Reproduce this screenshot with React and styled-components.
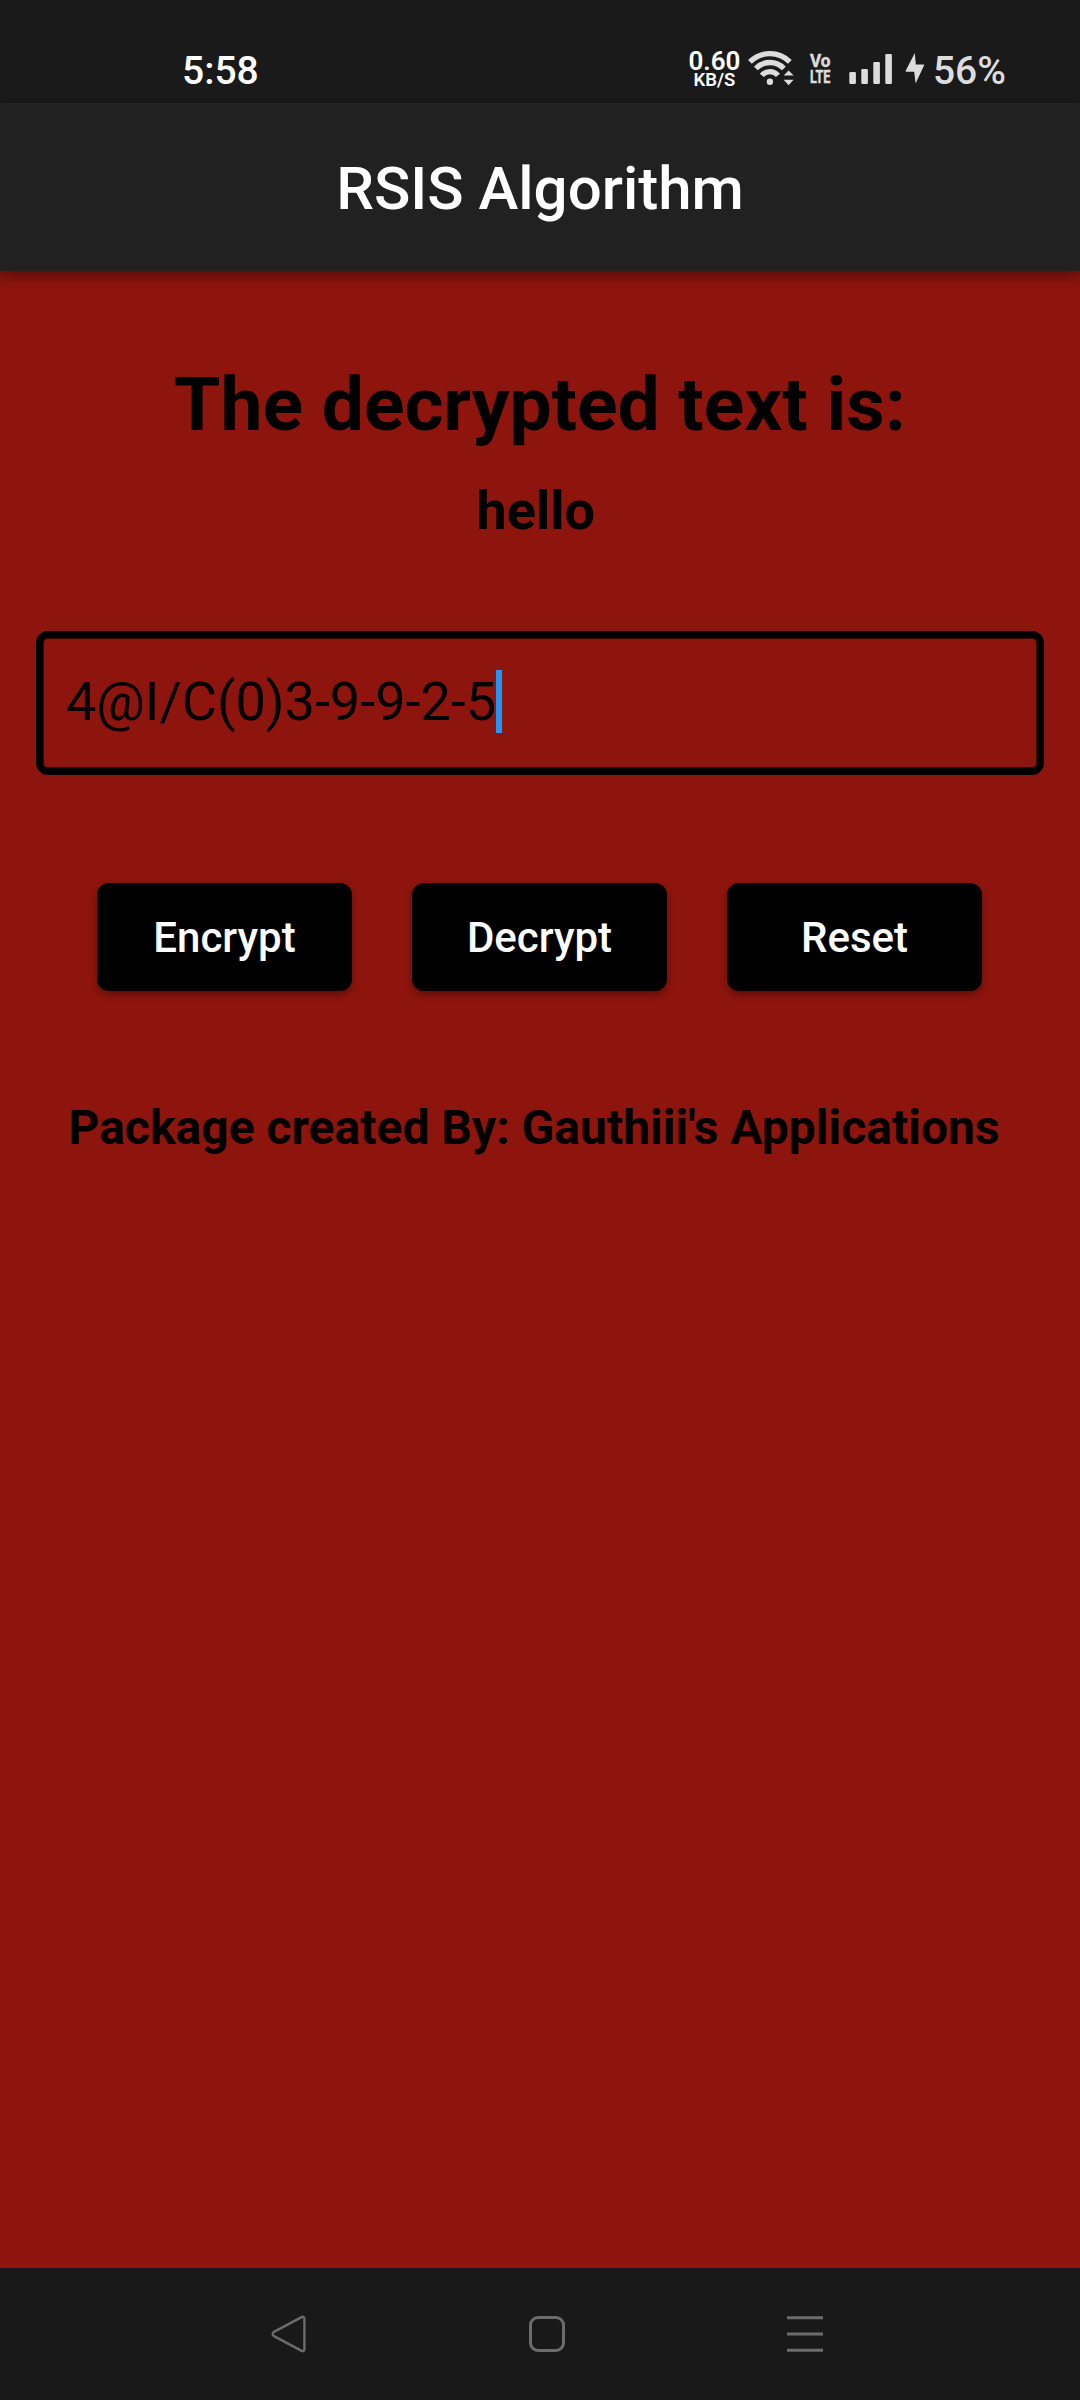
import React from "react";
import styled, { createGlobalStyle } from "styled-components";

const GlobalStyle = createGlobalStyle`
  *, *::before, *::after { box-sizing: border-box; }
  body {
    margin: 0;
    background: #8d150d;
    font-family: Roboto, "Liberation Sans", sans-serif;
  }
`;

const Screen = styled.div`
  width: 1080px;
  height: 2400px;
  display: flex;
  flex-direction: column;
  background: #8d150d;
  color: #000;
  overflow: hidden;
`;

const StatusBar = styled.header`
  height: 103px;
  flex: none;
  display: flex;
  justify-content: space-between;
  align-items: flex-start;
  padding: 48px 74px 0 182px;
  background: #1a1a1a;
`;

const Clock = styled.span`
  font-size: 39px;
  line-height: 46px;
  font-weight: 500;
  color: #fff;
`;

const StatusIcons = styled.div`
  display: flex;
  align-items: flex-start;
  height: 46px;
  color: #dcdcdc;
`;

const Speed = styled.div`
  width: 53px;
  margin-right: 8px;
  padding-top: 1px;
  display: flex;
  flex-direction: column;
  align-items: center;
  color: #fff;
  font-weight: 600;
`;

const SpeedValue = styled.span`
  font-size: 26px;
  line-height: 24px;
`;

const SpeedUnit = styled.span`
  font-size: 18.5px;
  line-height: 14px;
`;

const StatusGlyph = styled.svg`
  display: block;
  flex: none;
  overflow: visible;
  margin-top: -1px;
  margin-right: ${(p) => p.$gap}px;
`;

const Battery = styled.span`
  font-size: 39px;
  line-height: 46px;
  font-weight: 500;
`;

const AppBar = styled.div`
  height: 168px;
  flex: none;
  display: flex;
  align-items: center;
  justify-content: center;
  padding-top: 3px;
  background: #212121;
  box-shadow: 0 5px 14px rgba(0, 0, 0, 0.4);
  z-index: 1;
`;

const Title = styled.h1`
  margin: 0;
  font-size: 60px;
  line-height: 70px;
  font-weight: 500;
  color: #fff;
`;

const Content = styled.main`
  flex: 1;
  display: flex;
  flex-direction: column;
  align-items: center;
  padding: 89px 36px 0;
`;

const Heading = styled.h2`
  margin: 0 0 31px;
  font-size: 75px;
  line-height: 88px;
  font-weight: 700;
  white-space: pre;
`;

const Result = styled.p`
  margin: 0 0 89px 5px;
  font-size: 54px;
  line-height: 63px;
  font-weight: 700;
  white-space: pre;
`;

const Field = styled.div`
  width: 100%;
  height: 144px;
  display: flex;
  align-items: center;
  padding-left: 23px;
  border: 7px solid #000;
  border-radius: 12px;
  box-shadow: inset 0 0 0 1px rgba(0, 0, 0, 0.6);
  font-size: 54px;
  line-height: 63px;
`;

const Caret = styled.span`
  width: 6px;
  height: 63px;
  margin-top: -3px;
  background: #2196f3;
`;

const Value = styled.span`
  margin-top: -3px;
`;

const Actions = styled.div`
  display: flex;
  gap: 60px;
  margin: 108px 1px 108px 0;
`;

const Button = styled.button`
  width: 255px;
  height: 108px;
  padding: 0;
  border: 0;
  border-radius: 12px;
  background: #000;
  color: #fff;
  font-family: inherit;
  font-size: 42px;
  line-height: 49px;
  font-weight: 500;
  box-shadow: 0 4px 7px rgba(0, 0, 0, 0.32);
`;

const Credit = styled.p`
  margin: 0;
  font-size: 48px;
  line-height: 57px;
  font-weight: 700;
  white-space: pre;
`;

const NavBar = styled.nav`
  height: 132px;
  flex: none;
  display: flex;
  align-items: center;
  justify-content: space-between;
  padding: 0 256px 0 270px;
  background: #191919;
`;

const NavIcon = styled.svg`
  display: block;
  width: 38px;
  height: 38px;
  fill: none;
  stroke: #6c6c6c;
  stroke-width: 3;
  stroke-linejoin: round;
`;

const WifiIcon = () => (
  <StatusGlyph width="46" height="40" viewBox="0 0 46 40" $gap={15}>
    <g fill="none" stroke="currentColor" strokeWidth="5.3">
      <path d="M0.9 14.9 A28.3 28.3 0 0 1 40.9 14.9" />
      <path d="M6.9 21.5 A19.3 19.3 0 0 1 34.9 21.5" />
      <path d="M12.8 28.4 A10.6 10.6 0 0 1 29 28.4" />
    </g>
    <circle cx="20.9" cy="34.8" r="3.2" fill="currentColor" />
    <path d="M34.6 28.6 L39.6 23.4 L44.6 28.6 Z M34.6 32.8 L44.6 32.8 L39.6 38.2 Z" fill="currentColor" />
  </StatusGlyph>
);

const VolteIcon = () => (
  <StatusGlyph width="23" height="40" viewBox="0 0 23 40" $gap={16}>
    <g
      fill="currentColor"
      stroke="currentColor"
      strokeWidth="0.5"
      fontFamily="Roboto, sans-serif"
      fontWeight="700"
      fontSize="19"
    >
      <text transform="translate(0 20.4) scale(0.9 1)">Vo</text>
      <text transform="translate(0 36.4) scale(0.67 1)">LTE</text>
    </g>
  </StatusGlyph>
);

const BARS = [12, 15, 22, 30];

const SignalIcon = () => (
  <StatusGlyph width="44" height="40" viewBox="0 0 44 40" $gap={12}>
    {BARS.map((h, i) => (
      <rect key={h} x={0.3 + i * 12} y={37 - h} width="6.6" height={h} rx="1.2" fill="currentColor" />
    ))}
  </StatusGlyph>
);

const BoltIcon = () => (
  <StatusGlyph width="20" height="40" viewBox="0 0 20 40" $gap={8}>
    <path
      d="M9.8 6 L0.8 23.6 Q0.3 24.8 1.4 24.8 L9.2 24.8 L10.6 36.6 L19 18.6 Q19.5 17.4 18.4 17.4 L10.8 17.4 Z"
      fill="currentColor"
    />
  </StatusGlyph>
);

export default function App() {
  return (
    <>
      <GlobalStyle />
      <Screen>
        <StatusBar>
          <Clock>5:58</Clock>
          <StatusIcons>
            <Speed>
              <SpeedValue>0.60</SpeedValue>
              <SpeedUnit>KB/S</SpeedUnit>
            </Speed>
            <WifiIcon />
            <VolteIcon />
            <SignalIcon />
            <BoltIcon />
            <Battery>56%</Battery>
          </StatusIcons>
        </StatusBar>
        <AppBar>
          <Title>RSIS Algorithm</Title>
        </AppBar>
        <Content>
          <Heading>The decrypted text is:</Heading>
          <Result>{"hello "}</Result>
          <Field>
            <Value>4@I/C(0)3-9-9-2-5</Value>
            <Caret />
          </Field>
          <Actions>
            <Button>Encrypt</Button>
            <Button>Decrypt</Button>
            <Button>Reset</Button>
          </Actions>
          <Credit>{"Package created By: Gauthiii's Applications "}</Credit>
        </Content>
        <NavBar>
          <NavIcon viewBox="0 0 38 38">
            <path d="M31.2 2.4 Q34.4 0.6 34.4 4.2 L34.4 33.8 Q34.4 37.4 31.2 35.6 L4.4 21.4 Q0.8 19 4.4 16.6 Z" strokeWidth="2.4" />
          </NavIcon>
          <NavIcon viewBox="0 0 38 38">
            <rect x="2.5" y="2.5" width="33" height="33" rx="7.5" />
          </NavIcon>
          <NavIcon viewBox="0 0 38 38">
            <path d="M1 2.8 H37 M1 19 H37 M1 35.2 H37" />
          </NavIcon>
        </NavBar>
      </Screen>
    </>
  );
}
